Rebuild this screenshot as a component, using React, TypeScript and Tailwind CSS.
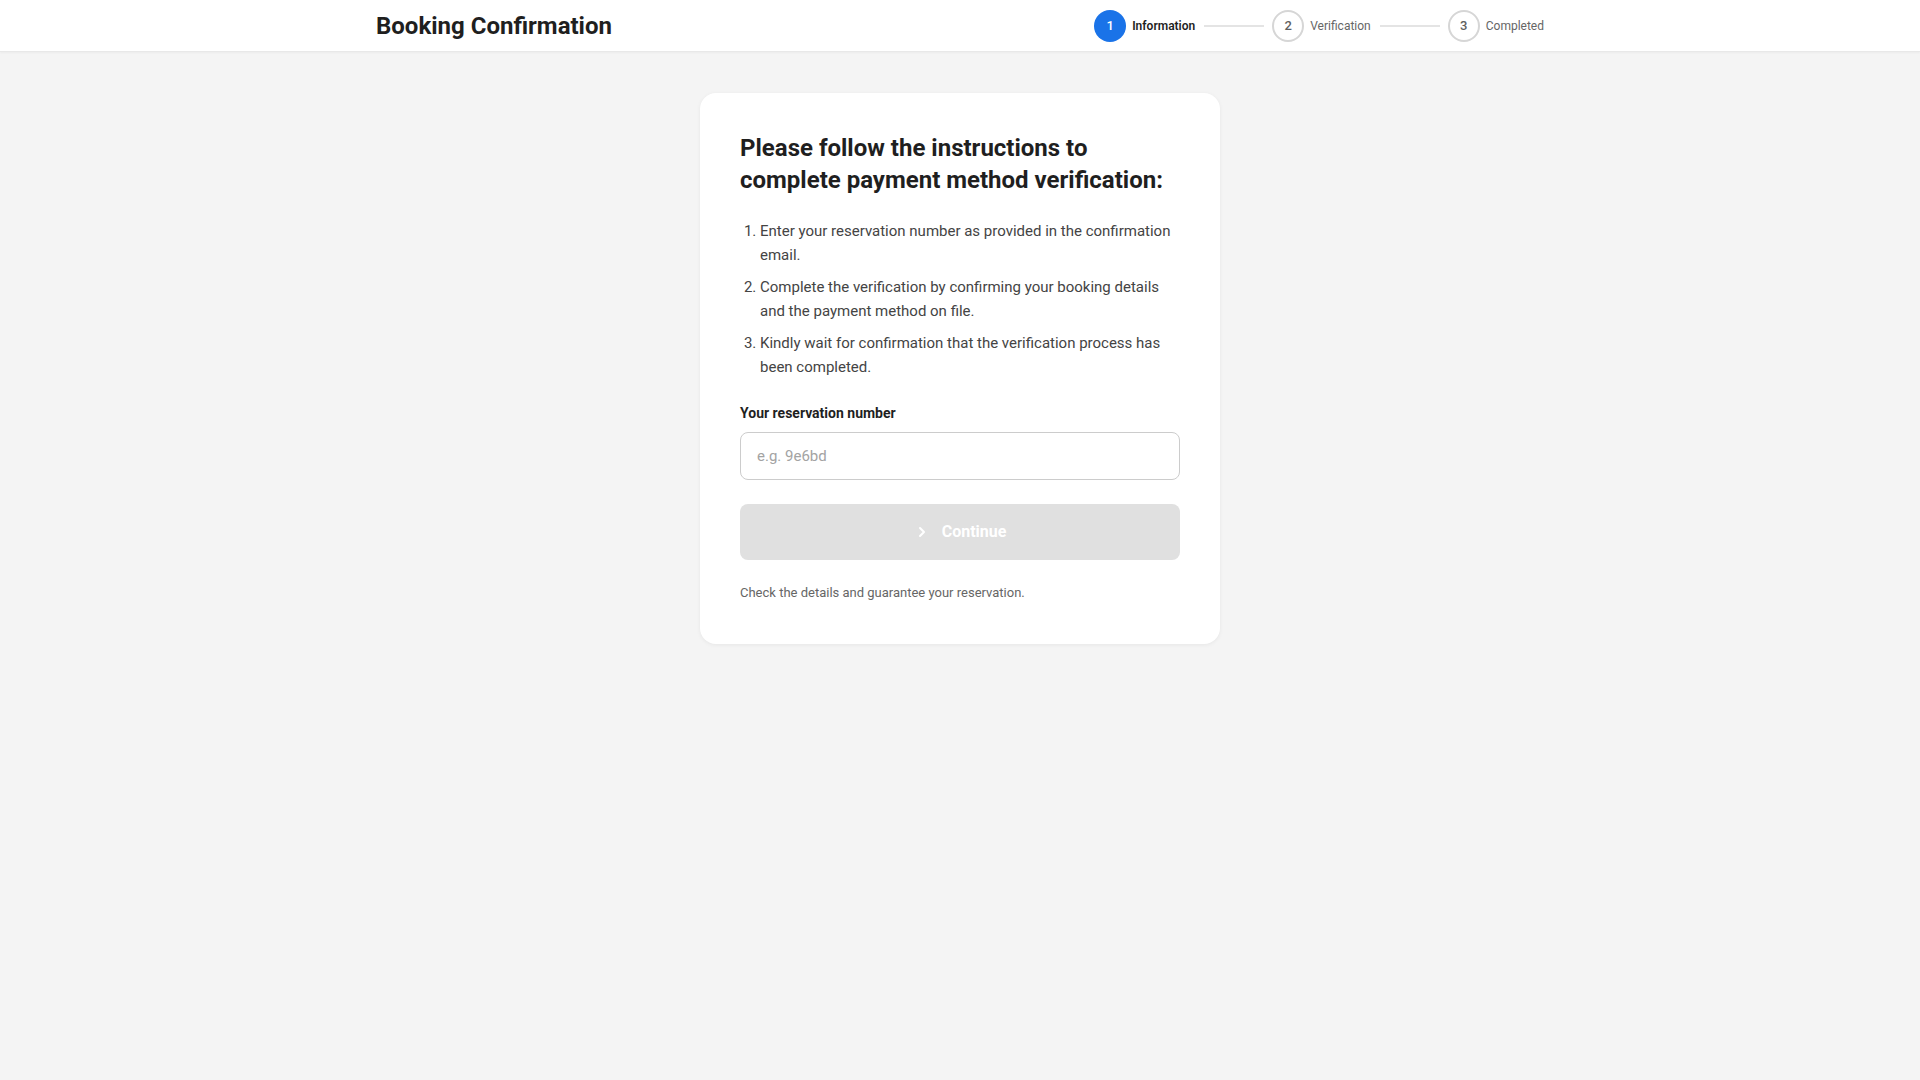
import { ChevronRight } from "lucide-react";

const steps = [
  { n: 1, label: "Information", active: true },
  { n: 2, label: "Verification", active: false },
  { n: 3, label: "Completed", active: false },
];

const instructions = [
  "Enter your reservation number as provided in the confirmation email.",
  "Complete the verification by confirming your booking details and the payment method on file.",
  "Kindly wait for confirmation that the verification process has been completed.",
];

function Stepper() {
  return (
    <div className="flex items-center">
      {steps.map((s, i) => (
        <div key={s.n} className="flex items-center">
          {i > 0 && <div className="ml-[9px] mr-2 h-[2px] w-[60px] bg-[#e4e4e4]" />}
          <div className="flex items-center gap-[6px]">
            <div
              className={[
                "flex h-8 w-8 items-center justify-center rounded-full text-[13px] font-medium",
                s.active
                  ? "bg-[#1a73e8] text-white"
                  : "border-2 border-[#d6d6d6] bg-white text-[#5f5f5f]",
              ].join(" ")}
            >
              {s.n}
            </div>
            <span
              className={
                s.active
                  ? "text-[12px] font-semibold text-[#1f1f1f]"
                  : "text-[12px] text-[#666666]"
              }
            >
              {s.label}
            </span>
          </div>
        </div>
      ))}
    </div>
  );
}

export default function App() {
  return (
    <div className="min-h-screen bg-[#f4f4f4] font-['Roboto',sans-serif] text-[#1f1f1f]">
      {/* Header */}
      <header className="h-[52px] border-b border-[#e8e8e8] bg-white shadow-[0_1px_2px_rgba(0,0,0,0.04)]">
        <div className="mx-auto flex h-full max-w-[1200px] items-center justify-between px-4">
          <h1 className="text-[24px] font-bold leading-none text-[#1f1f1f]">Booking Confirmation</h1>
          <Stepper />
        </div>
      </header>

      {/* Card */}
      <main className="flex justify-center pt-[41px]">
        <div className="w-[520px] rounded-2xl bg-white px-10 pb-[42px] pt-[39px] shadow-[0_1px_4px_rgba(0,0,0,0.06)]">
          <h2 className="text-[24px] font-bold leading-8 text-[#1f1f1f]">
            Please follow the instructions to complete payment method verification:
          </h2>

          <ol className="mt-[23px] list-decimal space-y-2 pl-5 text-[15px] leading-6 text-[#444444]">
            {instructions.map((t) => (
              <li key={t}>{t}</li>
            ))}
          </ol>

          <label className="mt-6 block text-[14px] font-bold leading-5 text-[#1f1f1f]">
            Your reservation number
          </label>
          <input
            type="text"
            placeholder="e.g. 9e6bd"
            className="mt-[9px] h-12 w-full rounded-lg border border-[#cccccc] bg-white px-4 text-[15px] text-[#1f1f1f] outline-none placeholder:text-[#a3a3a3]"
          />

          <button
            disabled
            className="mt-6 flex h-14 w-full items-center justify-center gap-3 rounded-lg bg-[#e0e0e0] text-[16px] font-bold text-white"
          >
            <ChevronRight size={16} strokeWidth={3} />
            Continue
          </button>

          <p className="mt-6 text-[13px] leading-[18px] text-[#666666]">
            Check the details and guarantee your reservation.
          </p>
        </div>
      </main>
    </div>
  );
}
